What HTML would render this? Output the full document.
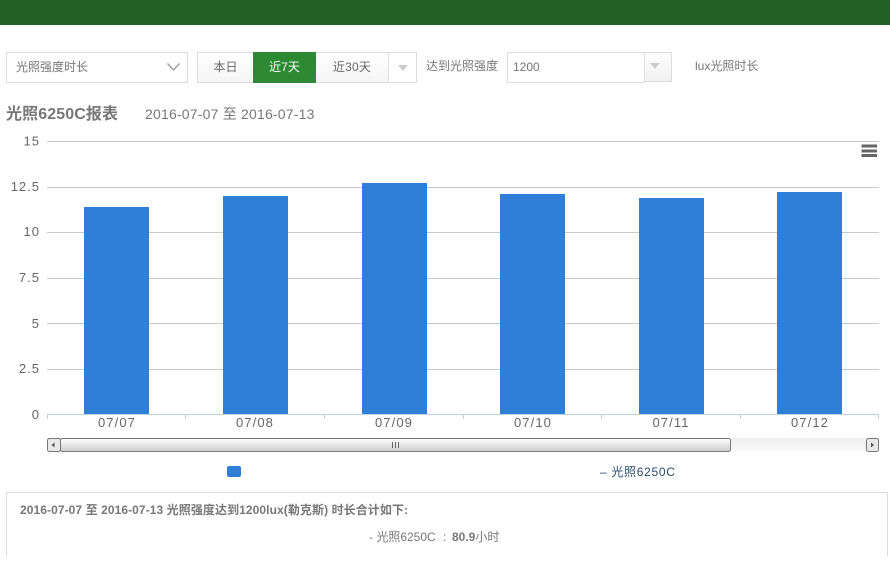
<!DOCTYPE html>
<html><head><meta charset="utf-8">
<style>
html,body{margin:0;padding:0;background:#fff;width:890px;height:563px;overflow:hidden}
body{position:relative;font-family:"Liberation Sans","Noto Sans CJK SC",sans-serif;color:#777;font-size:12px}
.a{position:absolute;box-sizing:border-box;white-space:nowrap}
.btn{background:linear-gradient(#fff,#f5f5f5);border:1px solid #ddd;text-align:center;line-height:29px;color:#666}
</style></head><body>
<div class="a" style="left:0;top:0;width:890px;height:25px;background:#226126"></div>

<div class="a" style="left:6px;top:52px;width:182px;height:31px;border:1px solid #ddd;line-height:29px;padding-left:9px;color:#777">光照强度时长</div>
<svg class="a" style="left:166px;top:60px" width="16" height="14"><path d="M1.5 3.5L7.5 10L13.5 3.5" fill="none" stroke="#999" stroke-width="1.3"/></svg>

<div class="a btn" style="left:197px;top:52px;width:57px;height:31px">本日</div>
<div class="a" style="left:253px;top:52px;width:63px;height:31px;background:#2d8a33;color:#fff;text-align:center;line-height:31px">近7天</div>
<div class="a btn" style="left:316px;top:52px;width:73px;height:31px;border-left:0;letter-spacing:.25px">近30天</div>
<div class="a" style="left:388px;top:52px;width:29px;height:31px;border:1px solid #ddd;background:#fff"></div>
<div class="a" style="left:398px;top:65px;width:0;height:0;border:5px solid transparent;border-top:6px solid #ccc;border-bottom:0"></div>

<div class="a" style="left:426px;top:58px;line-height:17px">达到光照强度</div>
<div class="a" style="left:507px;top:52px;width:138px;height:31px;border:1px solid #ddd;line-height:29px;padding-left:5px;color:#777">1200</div>
<div class="a" style="left:644px;top:52px;width:28px;height:30px;border:1px solid #ddd;background:linear-gradient(#fff,#f0f0f0)"></div>
<div class="a" style="left:650px;top:63px;width:0;height:0;border:5px solid transparent;border-top:6px solid #ccc;border-bottom:0"></div>
<div class="a" style="left:695px;top:58px;line-height:17px">lux光照时长</div>

<div class="a" style="left:6px;top:103px;font-size:16px;font-weight:bold;line-height:24px;letter-spacing:.1px;color:#777">光照6250C报表</div>
<div class="a" style="left:145px;top:105px;font-size:14px;line-height:18px;letter-spacing:.2px;color:#777">2016-07-07 至 2016-07-13</div>

<svg class="a" style="left:0;top:130px" width="890" height="360" viewBox="0 130 890 360">
  <g stroke="#c8c8c8" stroke-width="1" shape-rendering="crispEdges">
    <path d="M47 141.5H879M47 187.5H879M47 232.5H879M47 278.5H879M47 323.5H879M47 369.5H879"/>
  </g>
  <g fill="#2f7ed8" shape-rendering="crispEdges">
    <rect x="84" y="207" width="65" height="207"/>
    <rect x="223" y="196" width="65" height="218"/>
    <rect x="362" y="183" width="65" height="231"/>
    <rect x="500" y="194" width="65" height="220"/>
    <rect x="639" y="198" width="65" height="216"/>
    <rect x="777" y="192" width="65" height="222"/>
  </g>
  <path d="M47 414.5H879M47.5 414V419M185.5 414V419M324.5 414V419M463.5 414V419M601.5 414V419M740.5 414V419M878.5 414V419" stroke="#c0d0e0" fill="none" shape-rendering="crispEdges"/>
  <g font-family="Liberation Sans,sans-serif" font-size="13" fill="#666" text-anchor="end" letter-spacing="1">
    <text x="40" y="145.5">15</text>
    <text x="40" y="191">12.5</text>
    <text x="40" y="236">10</text>
    <text x="40" y="282">7.5</text>
    <text x="40" y="328">5</text>
    <text x="40" y="373">2.5</text>
    <text x="40" y="419">0</text>
  </g>
  <g font-family="Liberation Sans,sans-serif" font-size="13" fill="#666" text-anchor="middle" letter-spacing="1.1">
    <text x="117" y="427">07/07</text>
    <text x="255" y="427">07/08</text>
    <text x="394" y="427">07/09</text>
    <text x="533" y="427">07/10</text>
    <text x="671" y="427">07/11</text>
    <text x="810" y="427">07/12</text>
  </g>
  <path d="M861.5 146H877M861.5 151H877M861.5 155.5H877" stroke="#666" stroke-width="3" fill="none"/>
  <defs>
    <linearGradient id="tr" x1="0" y1="0" x2="0" y2="1"><stop offset="0" stop-color="#eee"/><stop offset="1" stop-color="#fafafa"/></linearGradient>
    <linearGradient id="th" x1="0" y1="0" x2="0" y2="1"><stop offset="0" stop-color="#fff"/><stop offset="1" stop-color="#ccc"/></linearGradient>
  </defs>
  <rect x="47" y="438" width="832" height="14" fill="url(#tr)"/>
  <rect x="60.5" y="438.5" width="670" height="13" rx="2" fill="url(#th)" stroke="#777"/>
  <rect x="47.5" y="438.5" width="13" height="13" rx="2" fill="#e8e8e8" stroke="#777"/>
  <rect x="866.5" y="438.5" width="12" height="13" rx="2" fill="#e8e8e8" stroke="#777"/>
  <path d="M54.5 442.5V447.5L51.5 445Z" fill="#555"/>
  <path d="M871 442.5V447.5L874 445Z" fill="#555"/>
  <path d="M392.5 442V448M395.5 442V448M398.5 442V448" stroke="#666" stroke-width="1" fill="none" shape-rendering="crispEdges"/>
  <rect x="227" y="466" width="14" height="11" rx="2" fill="#2f7ed8"/>
</svg>

<div class="a" style="left:600px;top:463px;font-size:12px;line-height:18px;color:#274b6d;letter-spacing:.7px">– 光照6250C</div>

<div class="a" style="left:6px;top:492px;width:882px;height:64px;border:1px solid #ddd;border-bottom:0"></div>
<div class="a" style="left:20px;top:502px;font-weight:bold;line-height:17px;letter-spacing:.08px;color:#777">2016-07-07 至 2016-07-13 光照强度达到1200lux(勒克斯) 时长合计如下:</div>
<div class="a" style="left:369px;top:529px;line-height:17px;color:#777">- 光照6250C</div>
<div class="a" style="left:443px;top:529px;line-height:17px;color:#777">:</div>
<div class="a" style="left:452px;top:529px;line-height:17px;color:#777"><b>80.9</b>小时</div>
</body></html>
